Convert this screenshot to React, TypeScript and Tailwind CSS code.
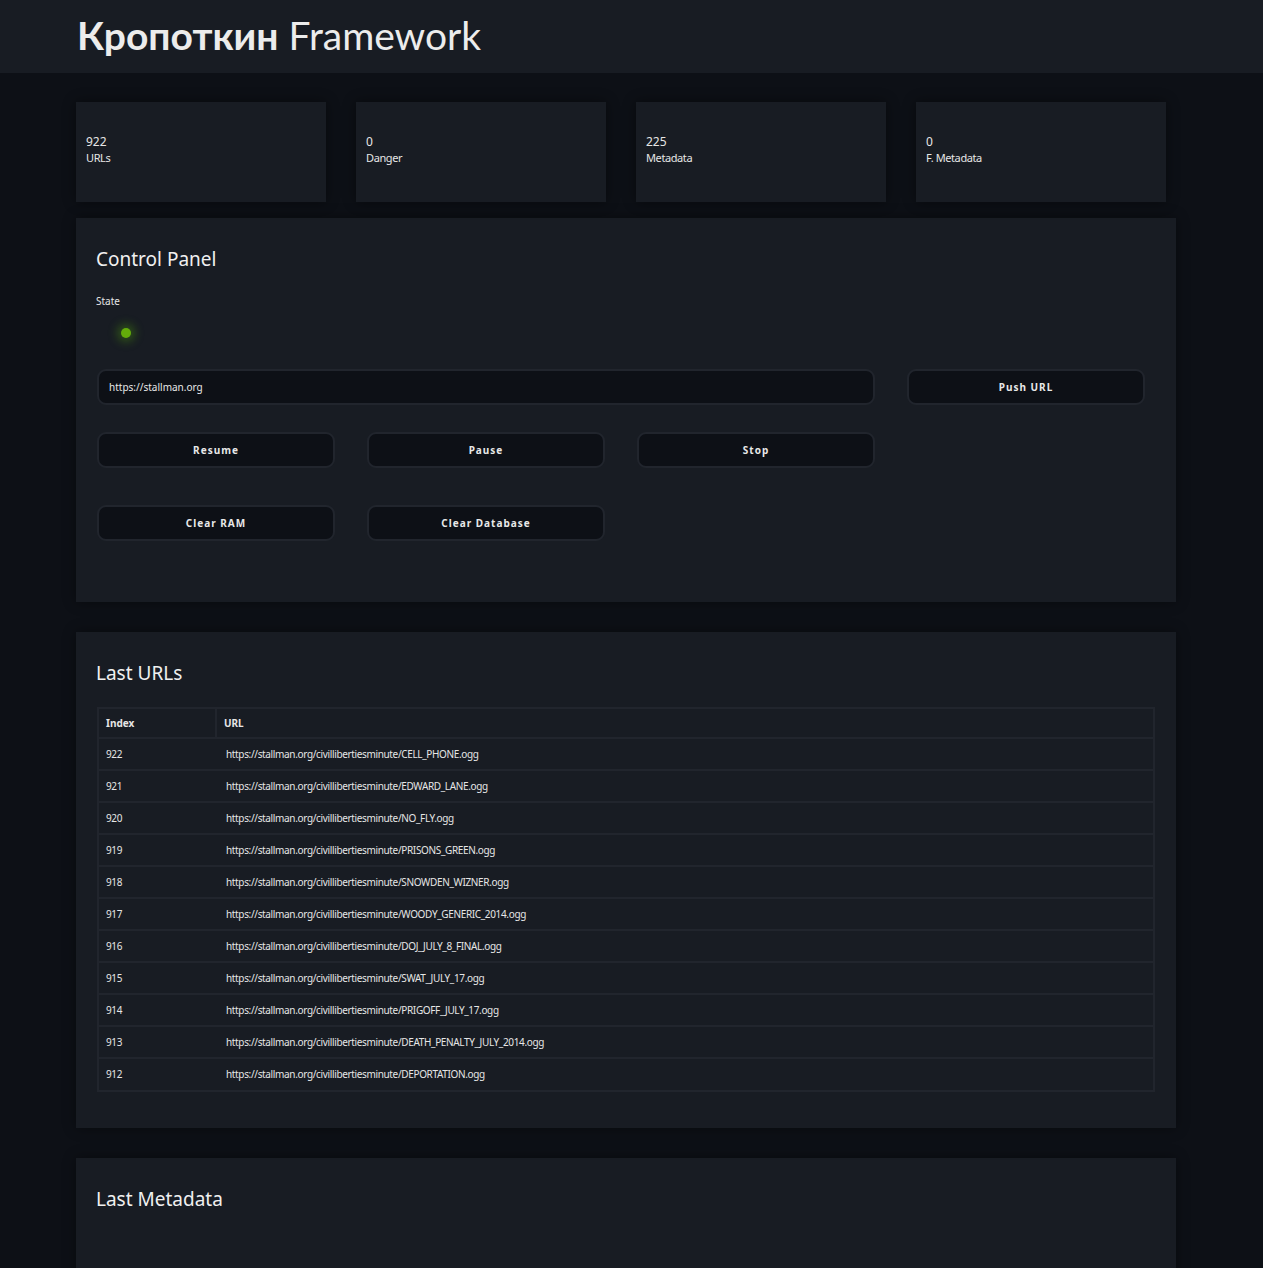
import React from "react";

const stats = [
  { v: "922", l: "URLs" },
  { v: "0", l: "Danger" },
  { v: "225", l: "Metadata" },
  { v: "0", l: "F. Metadata" },
];

const rows: [string, string][] = [
  ["922", "https://stallman.org/civillibertiesminute/CELL_PHONE.ogg"],
  ["921", "https://stallman.org/civillibertiesminute/EDWARD_LANE.ogg"],
  ["920", "https://stallman.org/civillibertiesminute/NO_FLY.ogg"],
  ["919", "https://stallman.org/civillibertiesminute/PRISONS_GREEN.ogg"],
  ["918", "https://stallman.org/civillibertiesminute/SNOWDEN_WIZNER.ogg"],
  ["917", "https://stallman.org/civillibertiesminute/WOODY_GENERIC_2014.ogg"],
  ["916", "https://stallman.org/civillibertiesminute/DOJ_JULY_8_FINAL.ogg"],
  ["915", "https://stallman.org/civillibertiesminute/SWAT_JULY_17.ogg"],
  ["914", "https://stallman.org/civillibertiesminute/PRIGOFF_JULY_17.ogg"],
  ["913", "https://stallman.org/civillibertiesminute/DEATH_PENALTY_JULY_2014.ogg"],
  ["912", "https://stallman.org/civillibertiesminute/DEPORTATION.ogg"],
];

function Btn({ children }: { children: React.ReactNode }) {
  return (
    <button className="h-[36px] w-[238px] rounded-[9px] border-2 border-[#21252d] bg-[#0d1016] text-[10px] font-bold tracking-[1px] text-[#e8e8e8]">
      {children}
    </button>
  );
}

export default function App() {
  return (
    <div
      className="min-h-[1268px] bg-[#0d1016] text-[#e6e6e6]"
      style={{ fontFamily: '"Noto Sans", "Open Sans", sans-serif' }}
    >
      <header className="h-[73px] bg-[#181c23] pl-[77px] flex items-center">
        <h1
          className="text-[39px] leading-none text-[#ececec] -mt-[2px]"
          style={{ fontFamily: 'Lato, "Noto Sans", sans-serif' }}
        >
          <span className="font-bold">Кропоткин</span> <span className="font-normal">Framework</span>
        </h1>
      </header>

      <main className="w-[1100px] ml-[76px] pt-[29px]">
        <div className="flex gap-[30px]">
          {stats.map((s) => (
            <div
              key={s.l}
              className="h-[100px] w-[250px] bg-[#181c23] pl-[10px] pt-[32px] shadow-[0_0_12px_rgba(0,0,0,0.45)]"
            >
              <div className="text-[12px] leading-[16px]">{s.v}</div>
              <div className="text-[11px] leading-[15px] tracking-[-0.4px]">{s.l}</div>
            </div>
          ))}
        </div>

        <section className="mt-[16px] h-[384px] bg-[#181c23] px-[20px] pt-[27px] shadow-[0_0_12px_rgba(0,0,0,0.4)]">
          <h2 className="text-[19px] leading-[28px] text-[#f0f0f0]">Control Panel</h2>
          <div className="mt-[21px] text-[10px] leading-[14px]">State</div>
          <div className="mt-[20px] ml-[25px] h-[10px] w-[10px] rounded-full bg-[#64ad0a] shadow-[0_0_10px_4px_rgba(80,160,10,0.4)]" />
          <div className="mt-[31px] flex gap-[32px] pl-[1px]">
            <div className="h-[36px] w-[778px] rounded-[9px] border-2 border-[#21252d] bg-[#0d1016] flex items-center pl-[10px] text-[10px] text-[#e8e8e8]">
              https://stallman.org
            </div>
            <Btn>Push URL</Btn>
          </div>
          <div className="mt-[27px] flex gap-[32px] pl-[1px]">
            <Btn>Resume</Btn>
            <Btn>Pause</Btn>
            <Btn>Stop</Btn>
          </div>
          <div className="mt-[37px] flex gap-[32px] pl-[1px]">
            <Btn>Clear RAM</Btn>
            <Btn>Clear Database</Btn>
          </div>
        </section>

        <section className="mt-[30px] bg-[#181c23] px-[20px] pt-[27px] pb-[36px] shadow-[0_0_12px_rgba(0,0,0,0.4)]">
          <h2 className="text-[19px] leading-[28px] text-[#f0f0f0]">Last URLs</h2>
          <div className="mt-[20px] ml-[1px] w-[1058px] border-2 border-[#21252d]">
            <div className="flex h-[30px] border-b-2 border-[#21252d] text-[10px] font-bold">
              <div className="w-[118px] border-r-2 border-[#21252d] pl-[7px] flex items-center">Index</div>
              <div className="pl-[7px] flex items-center">URL</div>
            </div>
            {rows.map(([i, u], idx) => (
              <div
                key={i}
                className={
                  "flex items-center text-[10px] tracking-[-0.35px] " +
                  (idx < rows.length - 1 ? "h-[32px] border-b-2 border-[#21252d]" : "h-[31px]")
                }
              >
                <div className="w-[120px] pl-[7px]">{i}</div>
                <div className="pl-[7px]">{u}</div>
              </div>
            ))}
          </div>
        </section>

        <section className="mt-[30px] h-[200px] bg-[#181c23] px-[20px] pt-[27px] shadow-[0_0_12px_rgba(0,0,0,0.4)]">
          <h2 className="text-[19px] leading-[28px] text-[#f0f0f0]">Last Metadata</h2>
        </section>
      </main>
    </div>
  );
}
